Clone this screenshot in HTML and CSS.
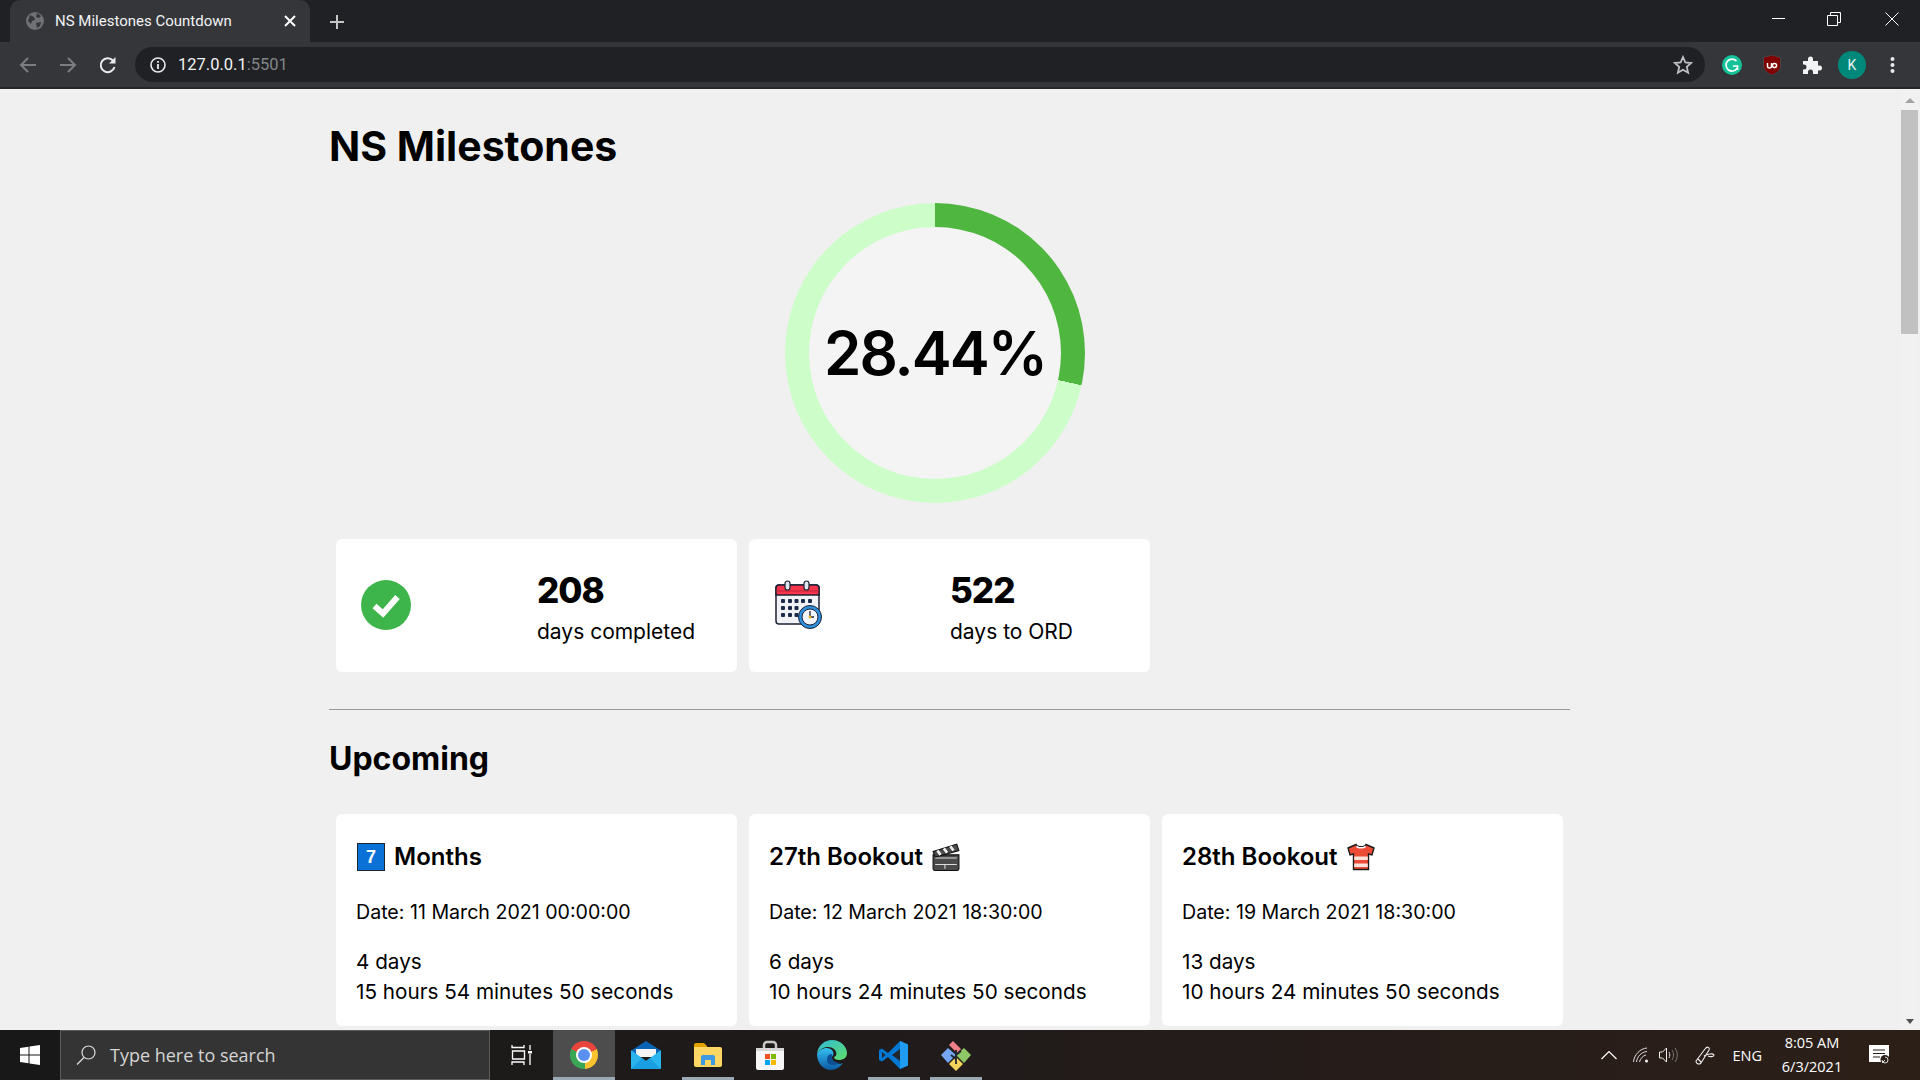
FILE: index.html
```html
<!DOCTYPE html>
<html lang="en">
<head>
    <meta charset="UTF-8">
    <meta name="viewport" content="width=device-width, initial-scale=1.0">
    <title>NS Milestones Countdown</title>
    <link rel="stylesheet" href="styles.css">
</head>
<body>
    <header class="tabstrip">
        <div class="tab">
            <svg class="favicon" viewBox="0 0 18 18"><circle cx="9" cy="9" r="9" fill="#6f7175"/><path d="M4 3l4 2 1 3-3 1-1 3-3-3zM11 1l4 3-2 2-3-1zM10 11l5-1-1 4-3 2z" fill="#35363a"/></svg>
            <span class="tab-title">NS Milestones Countdown</span>
            <svg class="tab-close" viewBox="0 0 12 12"><path d="M1 1l10 10M11 1L1 11" stroke="#fff" stroke-width="2"/></svg>
        </div>
        <svg class="new-tab" viewBox="0 0 14 14"><path d="M7 0v14M0 7h14" stroke="#c4c7c5" stroke-width="2"/></svg>
        <div class="window-controls">
            <svg viewBox="0 0 14 14"><path d="M0 6.5h13" stroke="#fff"/></svg>
            <svg viewBox="0 0 14 14"><path d="M.5 3.500h10v10H.5zM3.500 3V.5h10v10H11" fill="none" stroke="#fff"/></svg>
            <svg viewBox="0 0 14 14"><path d="M.5.5l13 13M13.500.5l-13 13" stroke="#fff"/></svg>
        </div>
    </header>

    <nav class="toolbar">
        <svg class="nav-icon" viewBox="0 0 18 18"><path d="M17 9H2M9 2L2 9l7 7" fill="none" stroke="#7b7d80" stroke-width="2"/></svg>
        <svg class="nav-icon" viewBox="0 0 18 18"><path d="M1 9h15M9 2l7 7-7 7" fill="none" stroke="#7b7d80" stroke-width="2"/></svg>
        <svg class="nav-icon" viewBox="0 0 18 18"><path d="M15.500 11A7 7 0 1 1 14 4.500" fill="none" stroke="#e8eaed" stroke-width="2"/><path d="M16.500 1v6.500H10z" fill="#e8eaed"/></svg>
        <div class="omnibox">
            <svg class="info-icon" viewBox="0 0 16 16"><circle cx="8" cy="8" r="7" fill="none" stroke="#e8eaed" stroke-width="1.600"/><path d="M8 7v5M8 4v1.800" stroke="#e8eaed" stroke-width="1.800"/></svg>
            <span class="url">127.0.0.1<span class="url-port">:5501</span></span>
            <svg class="star" viewBox="0 0 20 20"><path d="M10 2l2.400 5.500 5.800.5-4.400 3.900 1.300 5.800L10 14.700l-5.100 3 1.300-5.800L1.800 8l5.800-.5z" fill="none" stroke="#bdc1c6" stroke-width="1.800"/></svg>
        </div>
        <div class="extensions">
            <svg class="ext" viewBox="0 0 20 20"><circle cx="10" cy="10" r="10" fill="#15c39a"/><path d="M14.500 6A6 6 0 1 0 15 13.500M11 11h4.500v4" fill="none" stroke="#fff" stroke-width="1.700"/></svg>
            <svg class="ext" viewBox="0 0 20 20"><path d="M10 0l8.500 2.500V10c0 5-3.500 8-8.500 10C5 18 1.500 15 1.500 10V2.500z" fill="#800000" stroke="#4c4146"/><path d="M5.500 8v3a2 2 0 0 0 4 0V8M10.500 10a2 2 0 1 1 4 1 2 2 0 0 1-4-1z" fill="none" stroke="#fff" stroke-width="1.500"/></svg>
            <svg class="ext" viewBox="0 0 20 20"><path d="M1 6h5V4a2.500 2.500 0 0 1 5 0v2h5v4.500h1.500a2.500 2.500 0 0 1 0 5H16V19h-5v-2a2.500 2.500 0 0 0-5 0v2H1v-4.500h1a2.500 2.500 0 0 0 0-5H1z" fill="#f1f3f4"/></svg>
            <span class="avatar">K</span>
            <svg class="ext dots" viewBox="0 0 4 16"><circle cx="2" cy="2" r="2" fill="#e8eaed"/><circle cx="2" cy="8" r="2" fill="#e8eaed"/><circle cx="2" cy="14" r="2" fill="#e8eaed"/></svg>
        </div>
    </nav>

    <div class="viewport">
        <main class="content">
            <h1>NS Milestones</h1>

            <div class="ring">
                <div class="ring-inner">28.44%</div>
            </div>

            <section class="card-grid stats">
                <div class="card stat">
                    <div class="stat-icon">
                        <svg viewBox="0 0 50 50" width="50" height="50"><circle cx="25" cy="25" r="25" fill="#3db54a"/><path d="M13.500 26l8.500 7.500L36.500 17" fill="none" stroke="#fff" stroke-width="6"/></svg>
                    </div>
                    <div>
                        <div class="stat-number">208</div>
                        <div class="stat-label">days completed</div>
                    </div>
                </div>
                <div class="card stat">
                    <div class="stat-icon calendar">
                        <svg viewBox="0 0 48 50" width="48" height="50">
                            <rect x="1" y="5" width="43" height="39" rx="3" fill="#f1f2f6" stroke="#1c2233" stroke-width="1.500"/>
                            <path d="M1 15V8a3 3 0 0 1 3-3h37a3 3 0 0 1 3 3v7z" fill="#f8344c" stroke="#1c2233" stroke-width="1.500"/>
                            <path d="M1 11h43" stroke="#b8243a" stroke-width="1"/>
                            <rect x="10" y="1" width="5" height="9" rx="2.500" fill="#dfe6f2" stroke="#1c2233" stroke-width="1.200"/>
                            <rect x="29" y="1" width="5" height="9" rx="2.500" fill="#dfe6f2" stroke="#1c2233" stroke-width="1.200"/>
                            <g fill="#1c2a4a">
                                <rect x="6" y="19" width="4" height="4" rx="1"/><rect x="13" y="19" width="4" height="4" rx="1"/><rect x="19.500" y="19" width="4" height="4" rx="1"/><rect x="26" y="19" width="4" height="4" rx="1"/><rect x="33" y="19" width="4" height="4" rx="1"/>
                                <rect x="6" y="26" width="4" height="4" rx="1"/><rect x="13" y="26" width="4" height="4" rx="1"/><rect x="19.500" y="26" width="4" height="4" rx="1"/>
                                <rect x="6" y="33" width="4" height="4" rx="1"/><rect x="13" y="33" width="4" height="4" rx="1"/><rect x="19.500" y="33" width="4" height="4" rx="1"/>
                            </g>
                            <circle cx="35" cy="37" r="11.500" fill="#2e8fdd" stroke="#1c2233" stroke-width="1"/>
                            <circle cx="35" cy="37" r="8" fill="#f1f5fb" stroke="#1c2233" stroke-width="1"/>
                            <path d="M35 31v6h4" fill="none" stroke="#1c2233" stroke-width="1.300"/>
                            <circle cx="35" cy="37" r="1.500" fill="#e6b422"/>
                        </svg>
                    </div>
                    <div>
                        <div class="stat-number">522</div>
                        <div class="stat-label">days to ORD</div>
                    </div>
                </div>
            </section>

            <hr>

            <h2>Upcoming</h2>

            <section class="card-grid">
                <div class="card milestone">
                    <h3>
                        <svg class="emoji keycap-box" viewBox="0 0 28 28"><rect x=".5" y=".5" width="27" height="27" fill="#0a72d6" stroke="#1c2733"/><text x="14" y="20" text-anchor="middle" class="keycap">7</text></svg>
                        Months
                    </h3>
                    <p class="date">Date: 11 March 2021 00:00:00</p>
                    <p class="left">4 days<br>15 hours 54 minutes 50 seconds</p>
                </div>
                <div class="card milestone">
                    <h3>
                        27th Bookout
                        <svg class="emoji" viewBox="0 0 26 26">
                            <path d="M1 11h24v13a1.500 1.500 0 0 1-1.500 1.500h-21A1.500 1.500 0 0 1 1 24z" fill="#4a4a4a" stroke="#111"/>
                            <path d="M1 8L23 1l2 6L3 13z" fill="#4a4a4a" stroke="#111"/>
                            <path d="M5 7l3 4M11 5l3 4M17 3l3 4" stroke="#eee" stroke-width="2.500"/>
                            <path d="M3 14h20M3 20h20M12 20v4" stroke="#ddd"/>
                        </svg>
                    </h3>
                    <p class="date">Date: 12 March 2021 18:30:00</p>
                    <p class="left">6 days<br>10 hours 24 minutes 50 seconds</p>
                </div>
                <div class="card milestone">
                    <h3>
                        28th Bookout
                        <svg class="emoji" viewBox="0 0 28 28">
                            <path d="M9 1.500L1 5l2 7 3.500-1v15.500h15V11l3.500 1 2-7-8-3.500c-1 3-9 3-10 0z" fill="#ee4b36" stroke="#1c1c1c" stroke-width="1.400"/>
                            <path d="M10 2.500c1 2 7 2 8 0l1 1.500c-2 2-8 2-10 0z" fill="#fff"/>
                            <path d="M7.200 13.500h13.600v3.500H7.200zM7.200 20.500h13.600V24H7.200z" fill="#fbe3dc"/>
                        </svg>
                    </h3>
                    <p class="date">Date: 19 March 2021 18:30:00</p>
                    <p class="left">13 days<br>10 hours 24 minutes 50 seconds</p>
                </div>
            </section>
        </main>
        <div class="scrollbar">
            <span class="arrow-up"></span>
            <div class="thumb"></div>
            <span class="arrow-down"></span>
        </div>
    </div>

    <footer class="taskbar">
        <div class="start">
            <svg viewBox="0 0 20 20" width="20" height="20"><path d="M0 3l8.500-1.200V9.500H0zM9.500 1.600L20 0v9.500H9.500zM0 10.500h8.500v7.700L0 17zM9.500 10.500H20V20L9.500 18.400z" fill="#fff"/></svg>
        </div>
        <div class="search">
            <svg viewBox="0 0 20 20" width="20" height="20"><circle cx="12.500" cy="7.500" r="6.500" fill="none" stroke="#ddd" stroke-width="1.200"/><path d="M8 12.500L1 19.500" stroke="#ddd" stroke-width="1.200"/></svg>
            <span>Type here to search</span>
        </div>
        <div class="task-item taskview">
            <svg viewBox="0 0 22 20" width="22" height="20"><path d="M1 0v2.500h12V0M1.500 6h12v8h-12zM1 20v-3h12v3M19 0v5M19 9v11" fill="none" stroke="#fff" stroke-width="1.300"/><rect x="17" y="6" width="4" height="2.500" fill="#fff"/></svg>
        </div>
        <div class="task-item active open"><div class="chrome-logo"></div></div>
        <div class="task-item">
            <svg viewBox="0 0 30 28" width="30" height="28"><path d="M1 9L15 0l14 9v3H1z" fill="#0b63b5"/><path d="M5 8h20v8H5z" fill="#f4f4f4"/><path d="M0 9l15 11L30 9v19H0z" fill="#2bb5ef"/><path d="M0 28l11-11 4 3 4-3 11 11z" fill="#1a9fe3"/></svg>
        </div>
        <div class="task-item open">
            <svg viewBox="0 0 28 24" width="28" height="24"><path d="M0 2a2 2 0 0 1 2-2h8l3 3v4H0z" fill="#e0a100"/><path d="M0 4h26a2 2 0 0 1 2 2v16a2 2 0 0 1-2 2H2a2 2 0 0 1-2-2z" fill="#fdd663"/><path d="M7 22v-8a2 2 0 0 1 2-2h10a2 2 0 0 1 2 2v8h-4v-5h-6v5z" fill="#3d9ae0"/></svg>
        </div>
        <div class="task-item">
            <svg viewBox="0 0 30 30" width="30" height="30"><path d="M9 8V5a3 3 0 0 1 3-3h6a3 3 0 0 1 3 3v3" fill="none" stroke="#c8c8c8" stroke-width="2.500"/><path d="M1 8h28v20a2 2 0 0 1-2 2H3a2 2 0 0 1-2-2z" fill="#f7f7f7"/><path d="M1 8h28v3H1z" fill="#d6d6d6"/><rect x="10" y="14" width="5" height="5" fill="#f25022"/><rect x="16" y="14" width="5" height="5" fill="#7fba00"/><rect x="10" y="20" width="5" height="5" fill="#00a4ef"/><rect x="16" y="20" width="5" height="5" fill="#ffb900"/></svg>
        </div>
        <div class="task-item">
            <svg viewBox="0 0 30 30" width="30" height="30"><defs><linearGradient id="edgeBlue" x1="0" y1="0" x2="0" y2="1"><stop offset="0" stop-color="#35c1f1"/><stop offset="1" stop-color="#0c59a4"/></linearGradient><linearGradient id="edgeGreen" x1="0" y1="0" x2="1" y2="1"><stop offset="0" stop-color="#2fb8d8"/><stop offset="1" stop-color="#60e06a"/></linearGradient></defs><path d="M0 14C1 5 8 0 15 0c9 0 15 7 15 13 0 5-4 7-8 7-3 0-5-1-5-3 3-1 3-4 1-7-4-5-14-4-18 4z" fill="url(#edgeGreen)"/><path d="M0 14c3-6 11-8 15-4 2 2 2 5 0 7-1 5 5 9 11 6-3 4-7 7-12 7C6 30 0 23 0 14z" fill="url(#edgeBlue)"/><path d="M10 20c0-4 2-6 5-6-1 5 2 9 8 9-5 3-13 3-13-3z" fill="#0c4f92"/></svg>
        </div>
        <div class="task-item open">
            <svg viewBox="0 0 30 30" width="30" height="30"><path d="M21 1L9 13 3 8.500 0 10v10l3 1.500L9 17l12 12 8-3.500V4.500z" fill="#0078d4"/><path d="M21 1l8 3.500v21L21 29z" fill="#1f9cf0"/><path d="M21 9l-8 6 8 6z" fill="#22272e"/><path d="M3 12v6l3.500-3z" fill="#22272e"/></svg>
        </div>
        <div class="task-item open">
            <svg viewBox="0 0 32 32" width="32" height="32"><path d="M8 9l8 7-8 8-7-8z" fill="#76a7f7"/><path d="M24 9l7 7-7 8-8-8z" fill="#8fc966"/><path d="M16 18l7 7-7 7-7-7z" fill="#f2d45c"/><path d="M13 2l8 8-4 4-8-8z" fill="#ef7f86"/><path d="M16 11v14M16 16l5-4M16 20l-5-4" stroke="#20262e" stroke-width="1.800" fill="none"/></svg>
        </div>
        <div class="tray">
            <svg class="tray-icon chevron" viewBox="0 0 16 10" width="16" height="10"><path d="M.5 9L8 1.500 15.500 9" fill="none" stroke="#fff" stroke-width="1.200"/></svg>
            <svg class="tray-icon wifi" viewBox="0 0 16 16" width="16" height="16"><path d="M.5 15C1 8 7 1.500 14 1M3.500 15C4 10 8 5 14 4.500M6.500 15C7 12 10 8.500 13 8" fill="none" stroke="#ddd"/><circle cx="13.500" cy="14" r="1.500" fill="#fff"/></svg>
            <svg class="tray-icon speaker" viewBox="0 0 20 16" width="20" height="16"><path d="M.5 5h3l4-4v14l-4-4h-3z" fill="none" stroke="#eee"/><path d="M10 5c1 2 1 4 0 6" fill="none" stroke="#ddd"/><path d="M13 3c2 3 2 7 0 10M16 1c3 4 3 10 0 14" fill="none" stroke="#777"/></svg>
            <svg class="tray-icon pen" viewBox="0 0 20 20" width="20" height="20"><path d="M1 16l9-12c2-3 5-2 4 1L6 18c-2 2-5 1-5-2zM3 14l3 3M9 11c3-2 9-3 10-1 0 2-4 2-6 1" fill="none" stroke="#eee" stroke-width="1.100"/></svg>
            <span class="lang">ENG</span>
            <div class="clock"><span>8:05 AM</span><span>6/3/2021</span></div>
            <svg class="tray-icon notify" viewBox="0 0 22 20" width="22" height="20"><path d="M0 0h20v17H0z" fill="#fff"/><path d="M4 5h12M4 8.500h12M4 12h7" stroke="#2b1f19" stroke-width="1.200"/><circle cx="16" cy="14.500" r="4.500" fill="#2b1f19"/><path d="M13 15a3 3 0 1 0 3-3M13 18l3-3" fill="none" stroke="#ddd"/></svg>
        </div>
    </footer>
</body>
</html>
```

FILE: styles.css
```css
* { box-sizing: border-box; }
html, body { margin: 0; height: 100%; overflow: hidden; }
body { display: flex; flex-direction: column; height: 1080px; background: #f0f0f0; font-family: Inter, "Open Sans", sans-serif; color: #000; }

/* browser chrome */
.tabstrip { display: flex; align-items: flex-end; height: 42px; padding-left: 10px; background: #202124; flex-shrink: 0; }
.tab { display: flex; align-items: center; width: 300px; height: 42px; padding: 0 14px 0 16px; background: #35363a; border-radius: 10px 10px 0 0; }
.favicon { width: 18px; height: 18px; margin-right: 11px; }
.tab-title { flex: 1; font: 15px Roboto, sans-serif; color: #f1f3f4; }
.tab-close { width: 12px; height: 12px; }
.new-tab { width: 14px; height: 14px; margin: 0 0 13px 20px; }
.window-controls { display: flex; align-items: center; gap: 44px; margin-left: auto; align-self: flex-start; padding: 12px 21px 0 0; }
.window-controls svg { width: 14px; height: 14px; }
.window-controls svg:first-child { margin-right: -3px; }

.toolbar { display: flex; align-items: center; height: 47px; padding: 0 0 0 19px; background: #35363a; border-bottom: 2px solid #26272a; flex-shrink: 0; }
.nav-icon { width: 18px; height: 18px; margin-right: 22px; }
.omnibox { display: flex; align-items: center; width: 1570px; height: 35px; margin-left: -4px; padding: 0 12px 0 15px; background: #202124; border-radius: 18px; }
.info-icon { width: 16px; height: 16px; margin-right: 12px; }
.url { flex: 1; font: 16.500px Roboto, sans-serif; color: #f1f3f4; }
.url-port { color: #80868b; }
.star { width: 20px; height: 20px; }
.extensions { display: flex; align-items: center; gap: 20px; margin-left: 17px; }
.ext { width: 20px; height: 20px; }
.avatar { display: flex; align-items: center; justify-content: center; width: 28px; height: 28px; margin: 0 -4px; border-radius: 50%; background: #00897b; color: #e8f5f3; font: 14px Roboto, sans-serif; }
.dots { width: 5px; height: 16px; margin-left: 8px; }

/* page */
.viewport { flex: 1; display: flex; min-height: 0; overflow: hidden; }
.content { flex: 1; padding: 0 0 0 329px; overflow: hidden; }
h1 { margin: 31px 0 0; font-size: 41px; font-weight: 700; line-height: 52px; }
.ring { display: flex; align-items: center; justify-content: center; width: 300px; height: 300px; margin: 31px 0 0 456px; border-radius: 50%; background: conic-gradient(#4fb63f 0 28.44%, #cdfdc8 28.44% 100%); }
.ring-inner { display: flex; align-items: center; justify-content: center; width: 252px; height: 252px; border-radius: 50%; background: #f4f4f4; font: 600 60px Inter, sans-serif; letter-spacing: -2px; }

.card-grid { display: grid; grid-template-columns: repeat(3, 401px); gap: 12px; padding: 0 7px; width: 1241px; }
.stats { margin-top: 36px; }
.card { background: #fff; border-radius: 6px; }
.stat { display: flex; align-items: center; height: 133px; padding: 0 0 1px 25px; }
.stat-icon { display: flex; width: 176px; flex-shrink: 0; }
.stat-icon.calendar { padding-left: 1px; }
.stat-number { font-size: 35px; font-weight: 800; line-height: 44px; letter-spacing: -1px; margin-top: 5px; }
.stat-label { font-size: 21px; line-height: 30px; margin-top: 5px; }

hr { width: 1241px; height: 1px; margin: 37px 0 0; border: 0; background: #9a9a9a; }
h2 { margin: 29px 0 35px; font-size: 32px; font-weight: 700; line-height: 40px; }

.milestone { height: 212px; padding: 23px 20px 0 20px; line-height: 30px; }
.milestone h3 { display: flex; align-items: center; gap: 9px; height: 40px; margin: 0 0 20px; font-size: 24px; font-weight: 600; line-height: 40px; }
.milestone p { margin: 0 0 20px; white-space: nowrap; }
.date { font-size: 19.600px; }
.left { font-size: 20.700px; }
.emoji { width: 28px; height: 28px; }
.keycap-box { margin-left: 1px; }
.keycap { font: 700 18px "Liberation Sans", sans-serif; fill: #fff; }

.scrollbar { display: flex; flex-direction: column; align-items: center; width: 17px; margin-right: 2px; background: #f1f1f1; padding-top: 9px; }
.arrow-up { border: 5px solid transparent; border-top: 0; border-bottom: 5px solid #a3a3a3; }
.thumb { width: 17px; height: 224px; margin-top: 7px; background: #c1c1c1; }
.arrow-down { margin-top: auto; margin-bottom: 6px; border: 4px solid transparent; border-bottom: 0; border-top: 5px solid #505050; }

/* windows taskbar */
.taskbar { display: flex; align-items: stretch; height: 50px; flex-shrink: 0; background: linear-gradient(90deg, #181818 0%, #211b1b 50%, #2c1f18 100%); color: #fff; }
.start { display: flex; align-items: center; justify-content: center; width: 60px; }
.search { display: flex; align-items: center; gap: 14px; width: 430px; padding-left: 15px; background: #343434; border: 1px solid #5c5c5c; font: 18px "Open Sans", sans-serif; color: #d5d5d5; }
.task-item { display: flex; align-items: center; justify-content: center; width: 62px; }
.taskview { width: 63px; }
.task-item.open { box-shadow: inset 0 -3px 0 0 #9aaab5; clip-path: inset(0 5px 0 5px); }
.task-item.active { background: #4d4d4d; clip-path: none; }
.chrome-logo { position: relative; width: 28px; height: 28px; border-radius: 50%; background: conic-gradient(from -65deg, #e8453c 0 130deg, #f9c22e 130deg 240deg, #3aa757 240deg 360deg); }
.chrome-logo::after { content: ""; position: absolute; top: 8px; left: 8px; width: 12px; height: 12px; border-radius: 50%; background: #5a90f0; box-shadow: 0 0 0 2px #fff; }

.tray { display: flex; align-items: center; margin-left: auto; padding-right: 29px; }
.tray-icon { flex-shrink: 0; }
.chevron { margin-right: 1px; }
.wifi { margin-left: 15px; }
.speaker { margin-left: 10px; }
.pen { margin-left: 16px; }
.lang { margin-left: 17px; font: 14.500px "Open Sans", sans-serif; }
.clock { display: flex; flex-direction: column; align-items: center; width: 60px; margin-left: 20px; font: 14.500px/24px "Open Sans", sans-serif; }
.notify { margin-left: 27px; }
```
